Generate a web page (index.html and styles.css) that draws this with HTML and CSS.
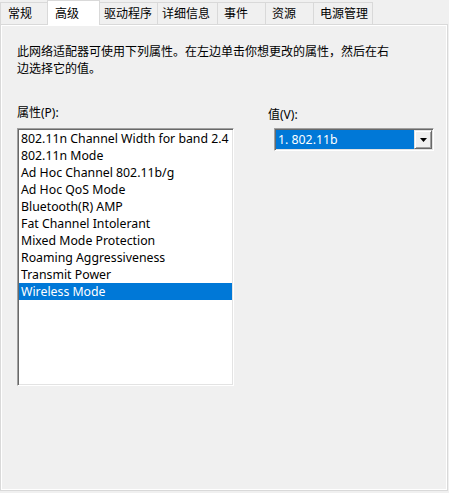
FILE: index.html
```html
<!DOCTYPE html>
<html lang="zh-CN">
<head>
<meta charset="utf-8">
<title>高级</title>
<link rel="stylesheet" href="styles.css">
</head>
<body>
<div class="tabs">
  <div class="tab t1">常规</div>
  <div class="tab t2 sel">高级</div>
  <div class="tab t3 wide">驱动程序</div>
  <div class="tab t4 wide">详细信息</div>
  <div class="tab t5">事件</div>
  <div class="tab t6">资源</div>
  <div class="tab t7">电源管理</div>
</div>
<div class="panel">
  <p class="desc">此网络适配器可使用下列属性。在左边单击你想更改的属性，然后在右边选择它的值。</p>
  <div class="cols">
    <div class="col-left">
      <div class="label">属性(P):</div>
      <div class="listbox">
        <div class="item">802.11n Channel Width for band 2.4</div>
        <div class="item">802.11n Mode</div>
        <div class="item">Ad Hoc Channel 802.11b/g</div>
        <div class="item">Ad Hoc QoS Mode</div>
        <div class="item">Bluetooth(R) AMP</div>
        <div class="item">Fat Channel Intolerant</div>
        <div class="item">Mixed Mode Protection</div>
        <div class="item">Roaming Aggressiveness</div>
        <div class="item">Transmit Power</div>
        <div class="item selected">Wireless Mode</div>
      </div>
    </div>
    <div class="col-right">
      <div class="label label-right">值(V):</div>
      <div class="combo">
        <div class="combo-value">1. 802.11b</div>
        <div class="combo-btn"><svg width="7" height="4" viewBox="0 0 7 4"><path d="M0 0h7L3.5 4z" fill="#000"/></svg></div>
      </div>
    </div>
  </div>
</div>
</body>
</html>
```

FILE: styles.css
```css
html, body {
  margin: 0;
  padding: 0;
}
body {
  width: 449px;
  height: 493px;
  overflow: hidden;
  background: #f0f0f0;
  color: #000;
  font-family: "Noto Sans", "Noto Sans CJK SC", sans-serif;
  font-size: 12px;
}

/* tab strip */
.tabs {
  display: flex;
  align-items: flex-end;
  height: 24px;
  position: relative;
  z-index: 2;
}
.tab {
  box-sizing: border-box;
  height: 22px;
  line-height: 20px;
  padding-left: 7px;
  border: 1px solid #d9d9d9;
  border-bottom: none;
  background: #f0f0f0;
  margin-left: -1px;
  white-space: nowrap;
  font-family: "Noto Sans CJK SC", sans-serif;
}
.tab.wide { padding-left: 4px; }
.t1 { width: 48px; margin-left: 0; }
.t2 { width: 53px; }
.t3 { width: 59px; }
.t4 { width: 61px; }
.t5 { width: 49px; padding-left: 6px; }
.t6 { width: 49px; padding-left: 6px; }
.t7 { width: 60px; padding-left: 6px; }
.tab.sel {
  height: 25px;
  margin-bottom: -1px;
  background: #fff;
  line-height: 23px;
  position: relative;
}

/* page panel */
.panel {
  box-sizing: border-box;
  width: 448px;
  height: 467px;
  border: 1px solid #d9d9d9;
  box-shadow: inset 1px 1px #fff, inset -1px -1px #fff;
  padding: 17px 0 0 16px;
}
.desc {
  margin: 0;
  width: 380px;
  line-height: 17px;
  font-family: "Noto Sans CJK SC", sans-serif;
}
.cols {
  display: flex;
  gap: 34px;
  margin-top: 28px;
}
.col-left { width: 217px; }
.label {
  height: 17px;
  line-height: 17px;
  margin-bottom: 7px;
}
.label-right {
  height: 19px;
  line-height: 21px;
  margin-bottom: 5px;
}

/* sunken list box */
.listbox {
  box-sizing: border-box;
  width: 217px;
  height: 258px;
  background: #fff;
  border: 1px solid;
  border-color: #a0a0a0 #fff #fff #a0a0a0;
  box-shadow: inset 1px 1px #696969, inset -1px -1px #e3e3e3;
  padding: 1px 1px 0 1px;
  overflow: hidden;
}
.item {
  height: 17px;
  line-height: 17px;
  padding-left: 2px;
  font-size: 12.3px;
  white-space: nowrap;
  overflow: hidden;
}
.item.selected {
  background: #0078d7;
  color: #fff;
}

/* combo box */
.combo {
  box-sizing: border-box;
  width: 160px;
  height: 23px;
  margin-left: 6px;
  display: flex;
  background: #fff;
  border: 1px solid;
  border-color: #a0a0a0 #fff #fff #a0a0a0;
  box-shadow: inset 1px 1px #696969, inset -1px -1px #e3e3e3;
  padding: 1px;
}
.combo-value {
  flex: 1;
  background: #0078d7;
  color: #fff;
  font-size: 12.3px;
  line-height: 19px;
  padding-left: 2px;
  white-space: nowrap;
}
.combo-btn {
  box-sizing: border-box;
  width: 18px;
  background: #f0f0f0;
  border: 1px solid;
  border-color: #e3e3e3 #696969 #696969 #e3e3e3;
  box-shadow: inset 1px 1px #fff, inset -1px -1px #a0a0a0;
  display: flex;
  align-items: center;
  justify-content: center;
}
.combo-btn svg { display: block; }
```
